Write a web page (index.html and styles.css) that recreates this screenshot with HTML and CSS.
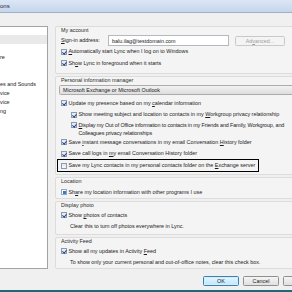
FILE: index.html
```html
<!DOCTYPE html>
<html>
<head>
  <meta charset="UTF-8"/>
  <title>Lync - Options</title>
  <link rel="stylesheet" href="styles.css">
</head>
<body>
<div class="titlebar">ons</div>
<div class="frame">
  <div class="panes">
    <div class="nav">
      <ul>
        <li></li>
        <li class="sel"></li>
        <li></li>
        <li>re</li>
        <li></li>
        <li></li>
        <li>es and Sounds</li>
        <li>vice</li>
        <li>vice</li>
        <li>ng</li>
      </ul>
    </div>
    <div class="pages">
      <div class="group g-account">
        <div class="head">My account</div>
        <div class="signin">
          <span class="lbl"><u>S</u>ign-in address:</span>
          <span class="field">balu.ilag@testdomain.com</span>
          <span class="btn off">Ad<u>v</u>anced...</span>
        </div>
        <div class="row"><span class="cb on"></span><span><u>A</u>utomatically start Lync when I log on to Windows</span></div>
        <div class="row"><span class="cb on"></span><span>Sh<u>o</u>w Lync in foreground when it starts</span></div>
      </div>
      <div class="group g-pim">
        <div class="head">Personal information manager</div>
        <div class="select">Microsoft Exchange or Microsoft Outlook</div>
        <div class="row first"><span class="cb on"></span><span>Update my presence based on my <u>c</u>alendar information</span></div>
        <div class="row sub"><span class="cb on"></span><span>Show meeting subject and location to contacts in my <u>W</u>orkgroup privacy relationship</span></div>
        <div class="row sub two"><span class="cb on"></span><span class="tight"><u>D</u>isplay my Out of Office information to contacts in my Friends and Family, Workgroup, and<br>Colleagues privacy relationships</span></div>
        <div class="row"><span class="cb on"></span><span>Save <u>i</u>nstant message conversations in my email Conversation <u>H</u>istory folder</span></div>
        <div class="row"><span class="cb on"></span><span>Save call logs in <u>m</u>y email Conversation History folder</span></div>
        <div class="row focus"><span class="cb"></span><span>Save my Lync contacts in my personal contacts folder on the <u>E</u>xchange server</span></div>
      </div>
      <div class="group g-loc">
        <div class="head">Location</div>
        <div class="row first"><span class="cb mixed"></span><span>Sh<u>a</u>re my location information with other programs I use</span></div>
      </div>
      <div class="group g-photo">
        <div class="head">Display photo</div>
        <div class="row"><span class="cb on"></span><span>Show <u>p</u>hotos of contacts</span></div>
        <div class="note">Clear this to turn off photos everywhere in Lync.</div>
      </div>
      <div class="group g-feed">
        <div class="head">Activity Feed</div>
        <div class="row"><span class="cb on"></span><span>Show all my updates in Activity <u>F</u>eed</span></div>
        <div class="note">To show only your current personal and out-of-office notes, clear this check box.</div>
      </div>
    </div>
  </div>
  <div class="actions">
    <span class="btn default">OK</span>
    <span class="btn">Cancel</span>
    <span class="btn"></span>
  </div>
</div>
<div class="taskbar"></div>
</body>
</html>
```

FILE: styles.css
```css
html, body{
  margin: 0;
  width: 292px;
  height: 292px;
  overflow: hidden;
}
body{
  background: #f0f0f0;
  color: #1b1b1b;
  font-family: "Liberation Sans", Arial, sans-serif;
  font-size: 5.4px;
  line-height: 7px;
}
u{text-decoration-thickness: 0.5px; text-underline-offset: 1px;}

.titlebar{
  height: 13px;
  line-height: 13px;
  font-size: 6px;
  color: #1e2a3a;
  background: linear-gradient(#dce7f5, #c5d6ec);
  border-bottom: 1px solid #9fb1c8;
  box-sizing: border-box;
}
.frame{
  height: 277px;
  box-sizing: border-box;
  padding-top: 13px;
}
.panes{
  display: flex;
  width: 340px;
  height: 243px;
}

/* left list */
.nav{
  width: 48px;
  height: 243px;
  flex: none;
  background: #fff;
  border: 1px solid #a3a3a3;
  border-left: none;
  box-sizing: border-box;
  overflow: hidden;
}
.nav ul{
  list-style: none;
  margin: -1px 0 0 0;
  padding: 0;
  white-space: nowrap;
}
.nav li{
  height: 9px;
  line-height: 9px;
}
.nav li.sel{background: #e9e9e9;}

/* right page */
.pages{
  margin-left: 7px;
  width: 270px;
  flex: none;
}
.group{
  border: 1px solid #dcdcdc;
  border-radius: 2px;
  background: #f4f4f4;
  padding: 0 3px 0 5px;
  margin-bottom: 2px;
  box-sizing: border-box;
}
.head{
  height: 6px;
  line-height: 6px;
  color: #2b2b2b;
}
.row{
  display: flex;
  align-items: center;
  height: 11.5px;
  white-space: nowrap;
}
.row.first{margin-top: 2.5px;}
.head + .row{margin-top: 1.5px;}
.g-loc .head + .row{margin-top: 2.5px;}
.row.sub{padding-left: 10px;}
.row.two{
  height: 16px;
  line-height: 8px;
  align-items: flex-start;
  padding-top: 0.5px;
  box-sizing: border-box;
}
.row.two .cb{margin-top: 1px;}
.tight{letter-spacing: -0.12px;}
.row.focus{
  outline: 1.5px solid #000;
  margin-left: -3px;
  padding-left: 3px;
  width: 197px;
  height: 11px;
  margin-top: 0.5px;
}
.note{
  height: 11.5px;
  line-height: 11.5px;
  padding-left: 9px;
  white-space: nowrap;
}

.cb{
  width: 6px;
  height: 6px;
  flex: none;
  margin-right: 1.5px;
  box-sizing: border-box;
  border: 1px solid #8c9cb0;
  background: linear-gradient(#dfe9f5, #f6f9fd);
  position: relative;
}
.cb.on::after{
  content: "";
  position: absolute;
  left: 1px;
  top: 0;
  width: 1.5px;
  height: 3px;
  border: solid #1f3f86;
  border-width: 0 1px 1px 0;
  transform: rotate(40deg);
}
.cb.mixed{background: #fff; border-color: #9aa9bb;}
.cb.mixed::after{
  content: "";
  position: absolute;
  inset: 0.5px;
  background: #2f80c4;
}

.signin{
  display: flex;
  align-items: center;
  height: 11px;
  margin-top: 2px;
}
.lbl{width: 47px; flex: none;}
.field{
  width: 121px;
  height: 11px;
  line-height: 10px;
  box-sizing: border-box;
  border: 1px solid #b5b9bf;
  background: #fff;
  padding-left: 3px;
  flex: none;
}
.btn{
  display: inline-block;
  height: 10px;
  line-height: 8px;
  width: 50px;
  text-align: center;
  box-sizing: border-box;
  border: 1px solid #8f8f8f;
  border-radius: 1.5px;
  background: linear-gradient(#f4f4f4, #e0e0e0);
}
.signin .btn{margin-left: 6px;}
.btn.off{
  color: #9d9d9d;
  border-color: #c9c9c9;
  background: #f4f4f4;
}
.select{
  height: 10px;
  line-height: 9px;
  margin: 2px -20px 0 -2px;
  padding-left: 3px;
  box-sizing: border-box;
  border: 1px solid #acacac;
  border-radius: 1.5px;
  background: linear-gradient(#f2f2f2, #dedede);
}

.g-account{height: 48px;}
.g-pim{height: 99px;}
.g-loc{height: 22px;}
.g-photo{height: 34px;}
.g-feed{height: 32px; margin-bottom: 0;}

.actions{
  display: flex;
  gap: 4px;
  padding-left: 203px;
  padding-top: 7px;
  white-space: nowrap;
}
.actions .btn{width: 36px; flex: none;}
.btn.default{
  border-color: #3c7fb1;
  background: linear-gradient(#eaf6fd, #bee6fd);
  box-shadow: inset 0 0 0 1px #cdeefc;
}
.taskbar{
  height: 2px;
  background: #1f6878;
}
```
